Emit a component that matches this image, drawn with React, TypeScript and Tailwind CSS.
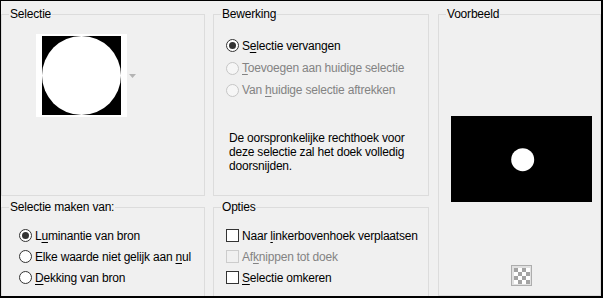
import React from 'react';

type GroupProps = {
  label: string;
  className?: string;
  children?: React.ReactNode;
};

function Group({ label, className = '', children }: GroupProps) {
  return (
    <div className={`relative border border-[#dcdcdc] ${className}`}>
      {/* legend sits over the top border line */}
      <span className="absolute -top-[9px] left-[7px] whitespace-nowrap bg-[#f0f0f0] px-[1px] leading-[16px] text-black">
        {label}
      </span>
      {children}
    </div>
  );
}

function Radio({ checked = false, disabled = false }: { checked?: boolean; disabled?: boolean }) {
  return (
    <span
      className={`flex h-[13px] w-[13px] shrink-0 items-center justify-center rounded-full border ${
        disabled ? 'border-[#c6c6c6] bg-[#f6f6f6]' : 'border-[#333333] bg-white'
      }`}
    >
      {checked && <span className="h-[7px] w-[7px] rounded-full bg-[#333333]" />}
    </span>
  );
}

function Check({ disabled = false }: { disabled?: boolean }) {
  return (
    <span
      className={`h-[13px] w-[13px] shrink-0 border ${
        disabled ? 'border-[#cccccc] bg-[#f0f0f0]' : 'border-[#333333] bg-white'
      }`}
    />
  );
}

function Checker() {
  // 4x4 transparency pattern
  const cells = [1, 0, 1, 0, 0, 1, 0, 1, 1, 0, 1, 0, 0, 1, 0, 1];
  return (
    <div className="grid h-[16px] w-[16px] grid-cols-4">
      {cells.map((c, i) => (
        <span key={i} className={c ? 'bg-[#a3a3a3]' : 'bg-white'} />
      ))}
    </div>
  );
}

export default function App() {
  return (
    <div className="h-[298px] w-[603px] overflow-hidden whitespace-nowrap border-t border-l border-r-2 border-b-2 border-black bg-[#f0f0f0] font-['Segoe_UI','Liberation_Sans',sans-serif] text-[12px] tracking-[-0.2px] text-black">
      <div className="flex gap-x-[8px] pt-[13px]">
        {/* Left column */}
        <div className="flex w-[204px] flex-col gap-[11px]">
          <Group label="Selectie" className="h-[182px]">
            <div className="flex items-center gap-[2px] pl-[34px] pt-[19px]">
              <svg width="91" height="83" viewBox="0 0 91 83">
                <rect width="91" height="83" fill="#ffffff" />
                <rect x="6" y="2" width="79" height="79" fill="#000000" />
                <circle cx="45.5" cy="41.5" r="39.5" fill="#ffffff" />
              </svg>
              <svg width="7" height="4" viewBox="0 0 7 4">
                <path d="M0 0 H7 L3.5 4 Z" fill="#b4b4b4" />
              </svg>
            </div>
          </Group>
          <Group label="Selectie maken van:" className="h-[92px]">
            <div className="flex flex-col pl-[17px] pt-[17px]">
              <label className="flex h-[21px] items-center gap-[3px]">
                <Radio checked />
                <span>
                  L<u className="underline-offset-2">u</u>minantie van bron
                </span>
              </label>
              <label className="flex h-[21px] items-center gap-[3px]">
                <Radio />
                <span>
                  Elke waarde niet gelijk aan <u className="underline-offset-2">n</u>ul
                </span>
              </label>
              <label className="flex h-[21px] items-center gap-[3px]">
                <Radio />
                <span>
                  <u className="underline-offset-2">D</u>ekking van bron
                </span>
              </label>
            </div>
          </Group>
        </div>

        {/* Middle column */}
        <div className="flex w-[216px] flex-col gap-[11px]">
          <Group label="Bewerking" className="h-[182px]">
            <div className="flex flex-col pl-[12px] pt-[19px]">
              <label className="flex h-[23px] items-center gap-[3px]">
                <Radio checked />
                <span>
                  S<u className="underline-offset-2">e</u>lectie vervangen
                </span>
              </label>
              <label className="flex h-[22px] items-center gap-[3px] text-[#838383]">
                <Radio disabled />
                <span>
                  <u className="underline-offset-2">T</u>oevoegen aan huidige selectie
                </span>
              </label>
              <label className="flex h-[22px] items-center gap-[3px] text-[#838383]">
                <Radio disabled />
                <span>
                  Van <u className="underline-offset-2">h</u>uidige selectie aftrekken
                </span>
              </label>
              <p className="mt-[30px] pl-[3px] leading-[14px]">
                De oorspronkelijke rechthoek voor
                <br />
                deze selectie zal het doek volledig
                <br />
                doorsnijden.
              </p>
            </div>
          </Group>
          <Group label="Opties" className="h-[92px]">
            <div className="flex flex-col pl-[12px] pt-[17px]">
              <label className="flex h-[21px] items-center gap-[3px]">
                <Check />
                <span>
                  Naar <u className="underline-offset-2">l</u>inkerbovenhoek verplaatsen
                </span>
              </label>
              <label className="flex h-[21px] items-center gap-[3px] text-[#838383]">
                <Check disabled />
                <span>
                  Af<u className="underline-offset-2">k</u>nippen tot doek
                </span>
              </label>
              <label className="flex h-[21px] items-center gap-[3px]">
                <Check />
                <span>
                  <u className="underline-offset-2">S</u>electie omkeren
                </span>
              </label>
            </div>
          </Group>
        </div>

        {/* Right column */}
        <Group label="Voorbeeld" className="ml-[1px] h-[282px] w-[163px]">
          <div className="flex flex-col pl-[12px] pt-[101px]">
            <svg width="141" height="86" viewBox="0 0 141 86">
              <rect width="141" height="86" fill="#000000" />
              <circle cx="71.7" cy="43.7" r="11.5" fill="#ffffff" />
            </svg>
            <button className="ml-[60px] mt-[63px] flex h-[21px] w-[21px] items-center justify-center border border-[#adadad] bg-[#e1e1e1]">
              <Checker />
            </button>
          </div>
        </Group>
      </div>
    </div>
  );
}
